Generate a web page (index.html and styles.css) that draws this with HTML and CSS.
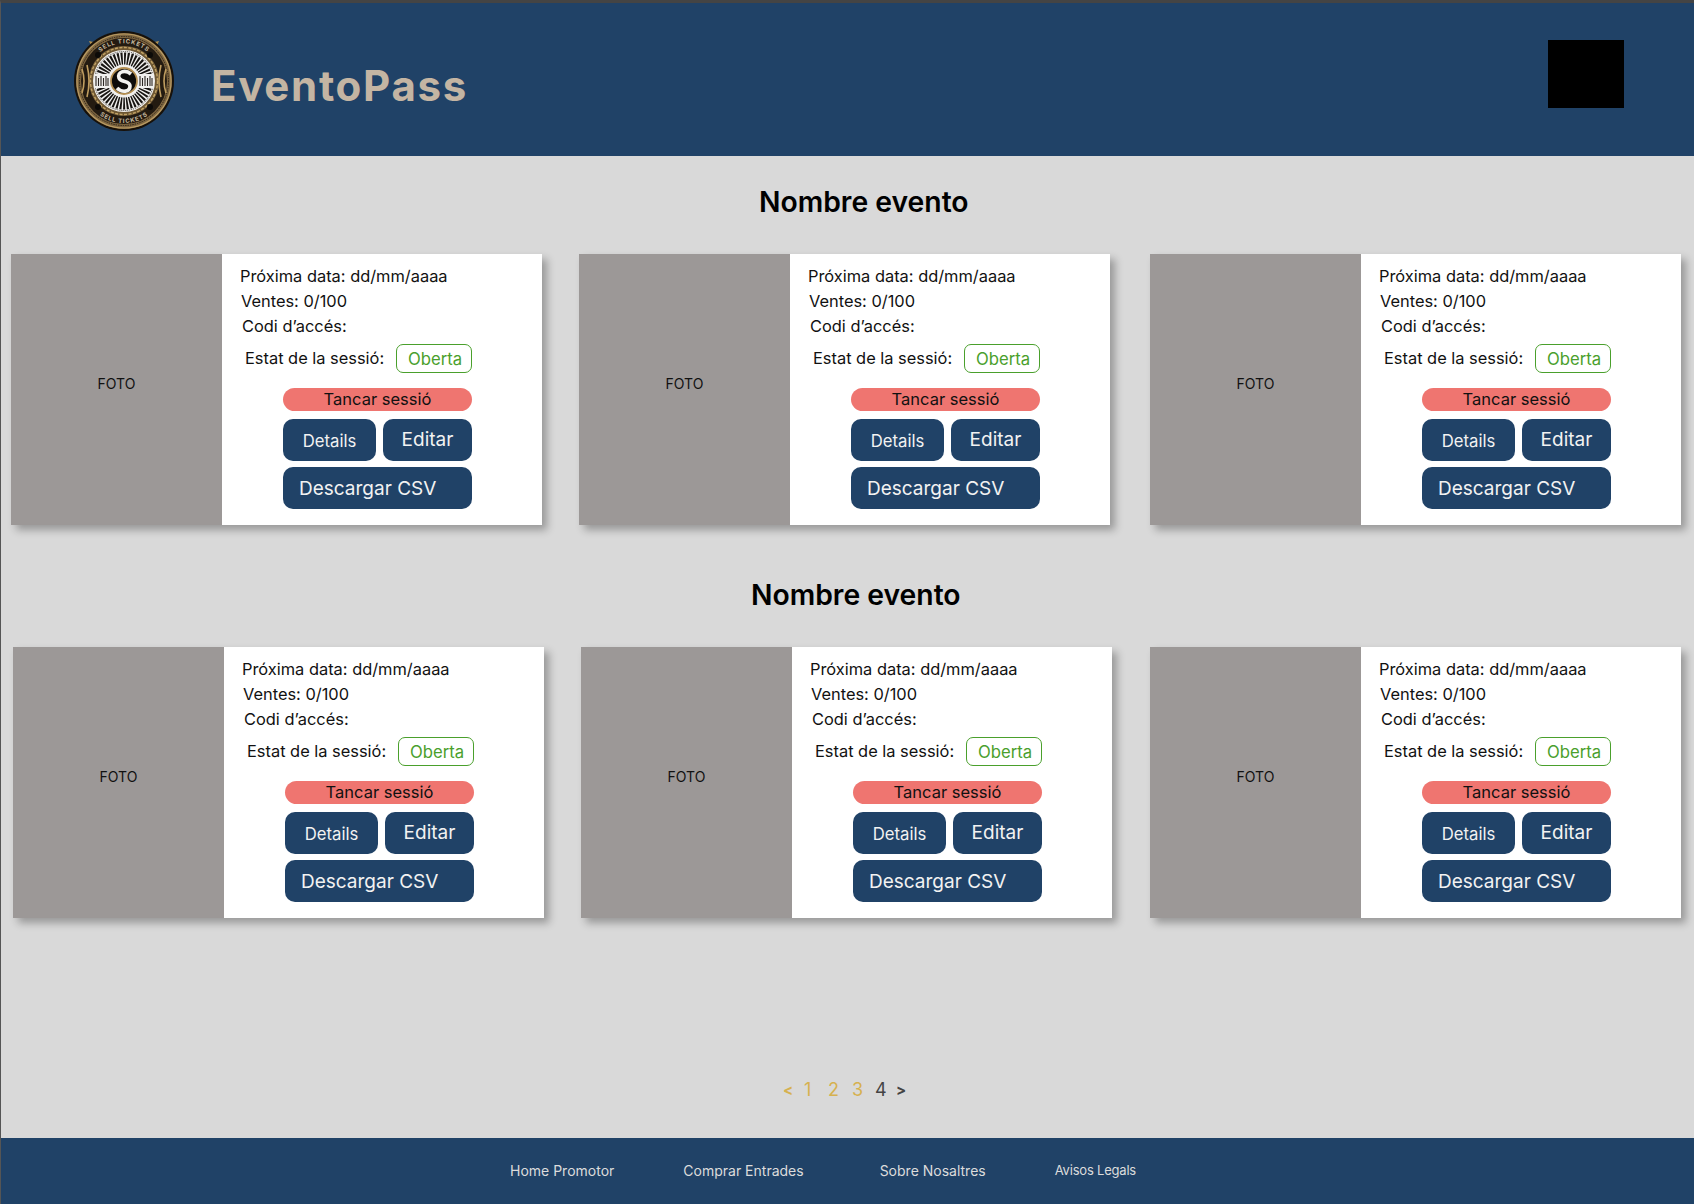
FILE: index.html
```html
<!DOCTYPE html>
<html lang="ca">
<head>
<meta charset="utf-8">
<title>EventoPass</title>
<link rel="stylesheet" href="styles.css">
</head>
<body>
<div class="page">
  <header class="header">
    <svg class="logo" viewBox="0 0 100 100" width="100" height="100" aria-hidden="true">
      <defs>
        <path id="arc-top" d="M21 27 A36 36 0 0 1 79 27"/>
        <path id="arc-bottom" d="M24 83 A42 42 0 0 0 76 83"/>
      </defs>
      <path d="M15 10 L24 12 L20 21Z M85 10 L76 12 L80 21Z" fill="#b3914f"/>
      <circle cx="50" cy="50" r="50" fill="#17110a"/>
      <circle cx="50" cy="50" r="48" fill="#7d6540"/>
      <circle cx="50" cy="50" r="47" fill="none" stroke="#b89a62" stroke-width="1.2"/>
      <circle cx="50" cy="50" r="44.5" fill="none" stroke="#2b2115" stroke-width="1" stroke-dasharray="1.4 1"/>
      <circle cx="50" cy="50" r="39" fill="none" stroke="#241b11" stroke-width="8"/>
      <circle cx="50" cy="50" r="34.5" fill="#6e5733"/>
      <circle cx="50" cy="50" r="33.5" fill="none" stroke="#c4a465" stroke-width="1.4" stroke-dasharray="3 1.5"/>
      <path d="M8 38 Q12 50 8 62 M92 38 Q88 50 92 62 M13 34 Q17 50 13 66 M87 34 Q83 50 87 66" fill="none" stroke="#c09e60" stroke-width="1.6"/>
      <text class="seal-text"><textPath href="#arc-top" startOffset="50%" text-anchor="middle">SELL TICKETS</textPath></text>
      <text class="seal-text"><textPath href="#arc-bottom" startOffset="50%" text-anchor="middle">SELL TICKETS</textPath></text>
      <circle cx="50" cy="50" r="31" fill="#f1f0ee"/>
      <circle cx="50" cy="50" r="22.5" fill="none" stroke="#181512" stroke-width="12" stroke-dasharray="1.8 1.3"/>
      <circle cx="50" cy="50" r="29.5" fill="none" stroke="#3a3530" stroke-width="1" stroke-dasharray="1 1"/>
      <rect x="20" y="43" width="16" height="14" fill="#f1f0ee"/>
      <rect x="64" y="43" width="16" height="14" fill="#f1f0ee"/>
      <path d="M22 45v10M24.500 47v8M27 45v10M29.500 47v8M32 45v10M34 47v8M66 45v10M68.500 47v8M71 45v10M73.500 47v8M76 45v10M78 47v8" stroke="#2b2622" stroke-width="1.1"/>
      <circle cx="50" cy="50" r="13" fill="#0e0c0a"/>
      <circle cx="50" cy="50" r="13" fill="none" stroke="#b48f52" stroke-width="1.8"/>
      <path d="M57 43 C51 38 43 41 45 47 C47 52 56 49 56 55 C56 61 48 62 43 57" fill="none" stroke="#f4f3f0" stroke-width="3.6"/>
      <circle cx="24" cy="24" r="3" fill="#0c0a08"/>
      <circle cx="76" cy="24" r="3" fill="#0c0a08"/>
      <circle cx="24" cy="76" r="3" fill="#0c0a08"/>
      <circle cx="76" cy="76" r="3" fill="#0c0a08"/>
    </svg>
    <div class="brand">EventoPass</div>
    <div class="square"></div>
  </header>

  <main class="main">
    <h2 class="title title-a">Nombre evento</h2>
    <section class="row row-a">
      <article class="card">
        <div class="photo">FOTO</div>
        <div class="info">
          <p class="line l1">Próxima data: dd/mm/aaaa</p>
          <p class="line l2">Ventes: 0/100</p>
          <p class="line l3">Codi d’accés:</p>
          <div class="state"><span>Estat de la sessió:</span><span class="badge">Oberta</span></div>
          <div class="actions">
            <button class="btn-close">Tancar sessió</button>
            <div class="pair"><button class="btn details">Details</button><button class="btn edit">Editar</button></div>
            <button class="btn csv">Descargar CSV</button>
          </div>
        </div>
      </article>
      <article class="card">
        <div class="photo">FOTO</div>
        <div class="info">
          <p class="line l1">Próxima data: dd/mm/aaaa</p>
          <p class="line l2">Ventes: 0/100</p>
          <p class="line l3">Codi d’accés:</p>
          <div class="state"><span>Estat de la sessió:</span><span class="badge">Oberta</span></div>
          <div class="actions">
            <button class="btn-close">Tancar sessió</button>
            <div class="pair"><button class="btn details">Details</button><button class="btn edit">Editar</button></div>
            <button class="btn csv">Descargar CSV</button>
          </div>
        </div>
      </article>
      <article class="card">
        <div class="photo">FOTO</div>
        <div class="info">
          <p class="line l1">Próxima data: dd/mm/aaaa</p>
          <p class="line l2">Ventes: 0/100</p>
          <p class="line l3">Codi d’accés:</p>
          <div class="state"><span>Estat de la sessió:</span><span class="badge">Oberta</span></div>
          <div class="actions">
            <button class="btn-close">Tancar sessió</button>
            <div class="pair"><button class="btn details">Details</button><button class="btn edit">Editar</button></div>
            <button class="btn csv">Descargar CSV</button>
          </div>
        </div>
      </article>
    </section>

    <h2 class="title title-b">Nombre evento</h2>
    <section class="row row-b">
      <article class="card">
        <div class="photo">FOTO</div>
        <div class="info">
          <p class="line l1">Próxima data: dd/mm/aaaa</p>
          <p class="line l2">Ventes: 0/100</p>
          <p class="line l3">Codi d’accés:</p>
          <div class="state"><span>Estat de la sessió:</span><span class="badge">Oberta</span></div>
          <div class="actions">
            <button class="btn-close">Tancar sessió</button>
            <div class="pair"><button class="btn details">Details</button><button class="btn edit">Editar</button></div>
            <button class="btn csv">Descargar CSV</button>
          </div>
        </div>
      </article>
      <article class="card">
        <div class="photo">FOTO</div>
        <div class="info">
          <p class="line l1">Próxima data: dd/mm/aaaa</p>
          <p class="line l2">Ventes: 0/100</p>
          <p class="line l3">Codi d’accés:</p>
          <div class="state"><span>Estat de la sessió:</span><span class="badge">Oberta</span></div>
          <div class="actions">
            <button class="btn-close">Tancar sessió</button>
            <div class="pair"><button class="btn details">Details</button><button class="btn edit">Editar</button></div>
            <button class="btn csv">Descargar CSV</button>
          </div>
        </div>
      </article>
      <article class="card">
        <div class="photo">FOTO</div>
        <div class="info">
          <p class="line l1">Próxima data: dd/mm/aaaa</p>
          <p class="line l2">Ventes: 0/100</p>
          <p class="line l3">Codi d’accés:</p>
          <div class="state"><span>Estat de la sessió:</span><span class="badge">Oberta</span></div>
          <div class="actions">
            <button class="btn-close">Tancar sessió</button>
            <div class="pair"><button class="btn details">Details</button><button class="btn edit">Editar</button></div>
            <button class="btn csv">Descargar CSV</button>
          </div>
        </div>
      </article>
    </section>

    <nav class="pager">
      <a class="arrow gold">&lt;</a><a class="gold">1</a><a class="gold">2</a><a class="gold">3</a><a class="dark">4</a><a class="arrow dark">&gt;</a>
    </nav>
  </main>

  <footer class="footer">
    <a class="f1">Home Promotor</a>
    <a class="f2">Comprar Entrades</a>
    <a class="f3">Sobre Nosaltres</a>
    <a class="f4">Avisos Legals</a>
  </footer>
</div>
</body>
</html>
```
FILE: styles.css
```css
* { box-sizing: border-box; }
html, body { margin: 0; padding: 0; }
body { font-family: "Inter", "Liberation Sans", sans-serif; color: #111; }

.page {
  width: 1694px;
  height: 1204px;
  display: flex;
  flex-direction: column;
  background: #d9d9d9;
  border-top: 3px solid #444;
  border-left: 1px solid #555;
  overflow: hidden;
}

.header {
  flex: none;
  height: 153px;
  background: #204267;
  display: flex;
  align-items: flex-start;
  padding: 28px 70px 0 73px;
}
.logo { flex: none; }
.seal-text { font-size: 6px; font-weight: 700; fill: #c9bda3; letter-spacing: 0.8px; }
.brand {
  margin: 30px 0 0 37px;
  font-size: 42px;
  line-height: 50px;
  font-weight: 700;
  color: #c4b5a3;
  letter-spacing: 1.7px;
}
.square {
  margin: 9px 0 0 auto;
  width: 76px;
  height: 68px;
  background: #000;
}

.main { flex: 1; display: flex; flex-direction: column; }
.title {
  margin: 0;
  font-size: 28.3px;
  line-height: 34px;
  font-weight: 600;
  color: #000;
}
.title-a { margin: 28.500px 0 0 758px; }
.title-b { margin: 53px 0 0 750px; }

.row { display: flex; margin-top: 35px; }
.row-a { padding-left: 10px; }
.row-a .card:nth-child(2) { margin-left: 37px; }
.row-a .card:nth-child(3) { margin-left: 40px; }
.row-b { padding-left: 12px; }
.row-b .card:nth-child(2) { margin-left: 37px; }
.row-b .card:nth-child(3) { margin-left: 38px; }

.card {
  flex: none;
  width: 531px;
  height: 271px;
  display: flex;
  background: #fff;
  box-shadow: 5px 5px 8px rgba(0, 0, 0, 0.3);
}
.photo {
  flex: none;
  width: 211px;
  padding-bottom: 12px;
  background: #9c9897;
  display: flex;
  align-items: center;
  justify-content: center;
  font-size: 14px;
}
.info { flex: 1; padding: 10px 0 0 18px; }
.line { margin: 0; font-size: 16.4px; line-height: 25px; }
.l2 { margin-left: 1px; }
.l3 { margin-left: 2px; }
.state {
  display: flex;
  align-items: center;
  margin: 5px 0 0 5px;
  font-size: 16.4px;
}
.badge {
  width: 76px;
  height: 29px;
  margin-left: 12px;
  border: 1px solid #4aa02c;
  border-radius: 7px;
  color: #4aa02c;
  font-size: 16.7px;
  display: flex;
  align-items: center;
  justify-content: center;
  padding: 1px 0 0 2px;
}
.actions {
  width: 189px;
  margin: 15px 0 0 43px;
  display: flex;
  flex-direction: column;
}
button { font-family: inherit; border: 0; padding: 0; cursor: pointer; }
.btn-close {
  height: 23px;
  border-radius: 12px;
  background: #ef7570;
  color: #111;
  font-size: 16.5px;
}
.pair { display: flex; justify-content: space-between; margin-top: 8px; }
.btn { background: #204267; color: #f2f2f2; height: 42px; border-radius: 10px; }
.details { width: 93px; font-size: 16.7px; padding-top: 2px; }
.edit { width: 89px; font-size: 19px; }
.csv { margin-top: 6px; font-size: 19px; text-align: left; padding: 1px 0 0 16px; }

.pager {
  display: flex;
  align-items: center;
  height: 24px;
  margin: 160px 0 0 782px;
  font-size: 18px;
}
.pager a { width: 24px; text-align: left; }
.pager a:nth-child(4) { width: 23px; }
.pager a:nth-child(5) { width: 21px; }
.pager .arrow { width: 21px; font-size: 15px; font-weight: 700; }
.gold { color: #d6b14f; }
.dark { color: #444; }

.footer {
  flex: none;
  height: 66px;
  padding-bottom: 2px;
  background: #204267;
  color: #dcdcdc;
  font-size: 14px;
  display: flex;
  align-items: center;
}
.footer a { display: block; }
.f1 { margin-left: 509px; }
.f2 { margin-left: 69px; }
.f3 { margin-left: 76px; }
.f4 { margin-left: 69px; font-size: 13px; letter-spacing: -0.2px; }
```
